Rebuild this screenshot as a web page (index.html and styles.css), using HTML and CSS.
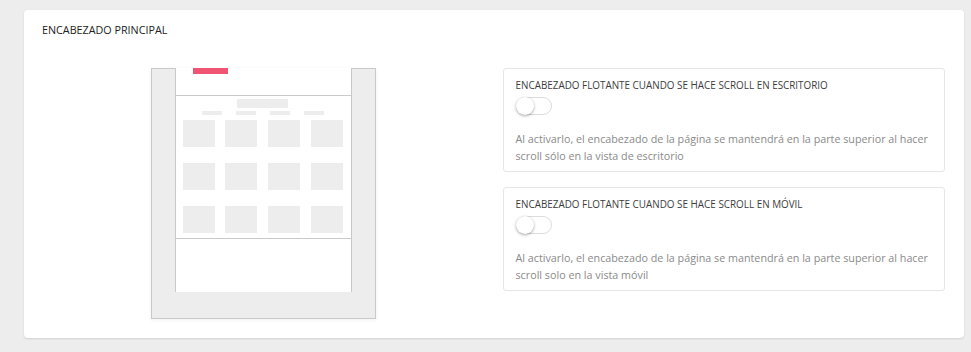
FILE: index.html
```html
<!DOCTYPE html>
<html lang="es">
<head>
    <meta charset="UTF-8">
    <meta name="viewport" content="width=device-width, initial-scale=1.0">
    <title>Encabezado principal</title>
    <link rel="stylesheet" href="styles.css">
</head>
<body>
    <div class="card">
        <h2 class="card-title">ENCABEZADO PRINCIPAL</h2>
        <div class="columns">
            <div class="preview">
                <div class="mock">
                    <div class="mock-screen">
                        <div class="mock-header">
                            <span class="mock-logo"></span>
                        </div>
                        <div class="mock-body">
                            <span class="mock-title"></span>
                            <div class="mock-nav">
                                <span></span><span></span><span></span><span></span>
                            </div>
                            <div class="mock-grid">
                                <span></span><span></span><span></span><span></span>
                                <span></span><span></span><span></span><span></span>
                                <span></span><span></span><span></span><span></span>
                            </div>
                        </div>
                        <div class="mock-footer"></div>
                    </div>
                </div>
            </div>
            <div class="options">
                <div class="option">
                    <div class="option-title">ENCABEZADO FLOTANTE CUANDO SE HACE SCROLL EN ESCRITORIO</div>
                    <label class="switch">
                        <input type="checkbox">
                        <span class="knob"></span>
                    </label>
                    <p class="option-help">Al activarlo, el encabezado de la página se mantendrá en la parte superior al hacer scroll sólo en la vista de escritorio</p>
                </div>
                <div class="option">
                    <div class="option-title">ENCABEZADO FLOTANTE CUANDO SE HACE SCROLL EN MÓVIL</div>
                    <label class="switch">
                        <input type="checkbox">
                        <span class="knob"></span>
                    </label>
                    <p class="option-help">Al activarlo, el encabezado de la página se mantendrá en la parte superior al hacer scroll solo en la vista móvil</p>
                </div>
            </div>
        </div>
    </div>
</body>
</html>
```

FILE: styles.css
```css
body {
    font-family: "Open Sans", Arial, sans-serif;
    background-color: #ededed;
    margin: 0;
    padding: 10px 7px 14px 24px;
}
.card {
    background-color: #fff;
    border-radius: 4px;
    box-shadow: 0 1px 2px rgba(0, 0, 0, 0.12);
    padding: 12px 19px 19px 18px;
}
.card-title {
    font-size: 10.75px;
    font-weight: 400;
    line-height: 16px;
    color: #222;
    margin: 0 0 30px;
}
.columns {
    display: grid;
    grid-template-columns: 1fr 1fr;
    gap: 18px;
}
.preview {
    display: flex;
    justify-content: center;
    align-items: flex-start;
}
/* boceto de la pagina */
.mock {
    box-sizing: border-box;
    width: 225px;
    height: 251px;
    background-color: #ededed;
    border: 1px solid #c9c9c9;
    padding: 0 23px;
    box-shadow: 0 1px 4px rgba(0, 0, 0, 0.06);
}
.mock-screen {
    margin-top: -1px;
    background-color: #fff;
    border-left: 1px solid #c9c9c9;
    border-right: 1px solid #c9c9c9;
}
.mock-header {
    height: 27px;
    border-bottom: 1px solid #c9c9c9;
    padding-left: 17px;
}
.mock-logo {
    display: block;
    width: 35px;
    height: 6px;
    background-color: #ef5573;
}
.mock-body {
    height: 139px;
    border-bottom: 1px solid #c9c9c9;
    padding: 3px 8px 0 7px;
    display: flex;
    flex-direction: column;
    align-items: center;
}
.mock-title {
    width: 51px;
    height: 9px;
    background-color: #ededed;
}
.mock-nav {
    display: flex;
    gap: 14px;
    margin-top: 3px;
}
.mock-nav span {
    width: 20px;
    height: 4px;
    background-color: #ededed;
}
.mock-grid {
    align-self: stretch;
    display: grid;
    grid-template-columns: repeat(4, 32px);
    grid-auto-rows: 27px;
    justify-content: space-between;
    row-gap: 16px;
    margin-top: 5px;
}
.mock-grid span {
    background-color: #ededed;
}
.mock-footer {
    height: 53px;
}
.options {
    display: flex;
    flex-direction: column;
    gap: 15px;
}
.option {
    border: 1px solid #e6e6e6;
    border-radius: 3px;
    padding: 9px 12px 6px;
}
.option-title {
    font-size: 9.9px;
    font-weight: 400;
    line-height: 15px;
    color: #3c3c3c;
}
.switch {
    display: block;
    position: relative;
    width: 36px;
    height: 18px;
    margin-top: 4px;
    cursor: pointer;
}
.switch input {
    display: none;
}
.switch .knob {
    position: absolute;
    top: 0;
    left: 0;
    right: 0;
    bottom: 0;
    box-sizing: border-box;
    border: 1px solid #dcdcdc;
    border-radius: 9px;
    background-color: #fff;
}
.switch .knob::before {
    content: "";
    position: absolute;
    top: -1px;
    left: -1px;
    width: 18px;
    height: 18px;
    border-radius: 50%;
    background-color: #fff;
    box-shadow: 0 1px 3px rgba(0, 0, 0, 0.35);
}
.option-help {
    font-size: 10.75px;
    line-height: 17px;
    color: #8a8a8a;
    margin: 16px 0 0;
}
```
